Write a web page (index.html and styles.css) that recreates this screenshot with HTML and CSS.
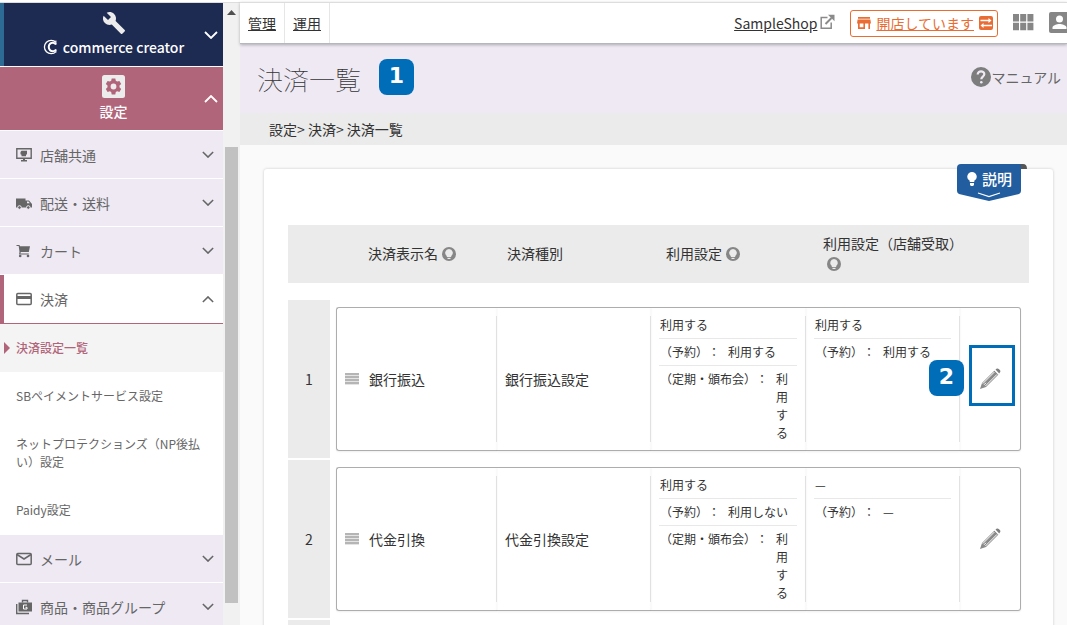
FILE: index.html
```html
<!DOCTYPE html>
<html lang="ja">
<head>
<meta charset="utf-8">
<title>決済一覧</title>
<link rel="stylesheet" href="styles.css">
</head>
<body>
<svg class="defs" aria-hidden="true">
  <symbol id="down" viewBox="0 0 14 8"><path d="M1 1l6 6 6-6" fill="none" stroke="currentColor" stroke-width="1.800"/></symbol>
  <symbol id="up" viewBox="0 0 14 8"><path d="M1 7l6-6 6 6" fill="none" stroke="currentColor" stroke-width="1.800"/></symbol>
  <symbol id="hint" viewBox="0 0 14 14"><circle cx="7" cy="7" r="7" fill="#868686"/><path d="M7 2a3.800 3.800 0 0 0-2.200 6.900V10h4.400V8.900A3.800 3.800 0 0 0 7 2z" fill="#ebebeb"/><path d="M5.500 10.800h3v1.200h-3z" fill="#ebebeb"/></symbol>
  <symbol id="pencil" viewBox="0 0 22 22"><path d="M1 21l2-6L15.500 2.500l4 4L7 19z" fill="#8a8a8a"/><path d="M16.500 1.600l1-.8c.8-.6 1.600-.4 2.300.3l1 1c.7.7.8 1.500.2 2.200l-.8 1.100z" fill="#7e7e7e"/><path d="M3.800 15.600L15.300 4.100M6.300 18.100L18 6.400M5 16.800l2-2" stroke="#fff" stroke-width="1"/><path d="M15.300 2l4.800 4.800" stroke="#fff" stroke-width=".9"/></symbol>
</svg>
<div class="app">
  <aside class="sidebar">
    <nav class="menu">
      <button class="brand" type="button">
        <svg width="24" height="24" viewBox="0 0 24 24"><path d="M22.700 19l-9.100-9.100c.9-2.300.4-5-1.500-6.900-2-2-5-2.400-7.400-1.300L9 6 6 9 1.600 4.700C.4 7.100.9 10.100 2.900 12.100c1.900 1.900 4.600 2.400 6.900 1.500l9.100 9.100c.4.4 1 .4 1.400 0l2.300-2.300c.5-.4.5-1.100.1-1.400z" fill="#ececec"/></svg>
        <span class="brand-name"><svg width="15" height="16" viewBox="0 0 15 16" fill="none"><path d="M13 3.400A6.700 6.700 0 1 0 13 12.600" stroke="#fff" stroke-width="1.300"/><path d="M13 5.500A4 4.300 0 1 0 13 10.500" stroke="#fff" stroke-width="2"/><path d="M12.900 1.500v4M12.900 10.500v3" stroke="#fff"/></svg>commerce creator</span>
        <svg class="toggle" width="14" height="8"><use href="#down"/></svg>
      </button>
      <button class="section" type="button">
        <svg width="23" height="23" viewBox="0 0 23 23"><rect width="23" height="23" rx="2.500" fill="#ececec"/><path d="M9.700 3.500h3.600l.5 2.300 1.400.8 2.200-.7 1.800 3.100-1.700 1.600v1.700l1.700 1.600-1.800 3.100-2.200-.7-1.400.8-.5 2.300H9.700l-.5-2.300-1.400-.8-2.200.7-1.800-3.100 1.700-1.600v-1.700L3.800 9l1.800-3.100 2.200.7 1.400-.8zM11.500 8.600a2.900 2.900 0 1 0 0 5.800 2.900 2.900 0 0 0 0-5.800z" fill="#b1657a" fill-rule="evenodd"/></svg>
        <span>設定</span>
        <svg class="toggle" width="14" height="8"><use href="#up"/></svg>
      </button>
      <button class="item" type="button">
        <svg width="16" height="16" viewBox="0 0 16 16" fill="#666"><path d="M.8 1.800h14.400v9.400H.8z" fill="none" stroke="#666" stroke-width="1.400"/><path d="M5.500 3.800H11v3.400l-1 .5V9.200H5.500V7.700l-1-.5V5zM7 11h2v2h2v1.500H5V13h2z"/></svg>
        <span>店舗共通</span><svg class="arrow" width="12" height="7"><use href="#down"/></svg>
      </button>
      <button class="item" type="button">
        <svg width="16" height="16" viewBox="0 0 16 16" fill="#666"><path d="M0 3.500h9.500v9H0zM9.500 5.500H13L16 9v3.500H9.500z"/><path d="M11 6.500h1.500l1.300 1.800H11z" fill="#eee9f3"/><circle cx="3.500" cy="12.500" r="1.800" stroke="#eee9f3"/><circle cx="12.300" cy="12.500" r="1.800" stroke="#eee9f3"/></svg>
        <span>配送・送料</span><svg class="arrow" width="12" height="7"><use href="#down"/></svg>
      </button>
      <button class="item" type="button">
        <svg width="16" height="16" viewBox="0 0 16 16" fill="#666"><path d="M.5 2h3l.5 1.200h10L12.800 9H4.800l-.4 1.500h8.400v1H3L3.500 9 2.700 3H.5z"/><circle cx="4.200" cy="13" r="1.300"/><circle cx="12" cy="13" r="1.300"/></svg>
        <span>カート</span><svg class="arrow" width="12" height="7"><use href="#down"/></svg>
      </button>
      <button class="item item-open" type="button">
        <svg width="16" height="16" viewBox="0 0 16 16"><rect x=".8" y="2.500" width="14.400" height="11" rx="1" fill="none" stroke="#666" stroke-width="1.500"/><path d="M1 5h14v3H1z" fill="#666"/></svg>
        <span>決済</span><svg class="arrow" width="12" height="7"><use href="#up"/></svg>
      </button>
      <ul class="submenu">
        <li><a class="current" href="#">決済設定一覧</a></li>
        <li><a href="#">SBペイメントサービス設定</a></li>
        <li><a href="#">ネットプロテクションズ（NP後払い）設定</a></li>
        <li><a href="#">Paidy設定</a></li>
      </ul>
      <button class="item" type="button">
        <svg width="16" height="16" viewBox="0 0 16 16" fill="none" stroke="#666" stroke-width="1.500"><rect x=".8" y="2.500" width="14.400" height="11" rx="1"/><path d="M1 3.500l7 4.500 7-4.500"/></svg>
        <span>メール</span><svg class="arrow" width="12" height="7"><use href="#down"/></svg>
      </button>
      <button class="item" type="button">
        <svg width="16" height="16" viewBox="0 0 16 16"><path d="M.7 5v9.500H13" fill="none" stroke="#666" stroke-width="1.400"/><path d="M6.500 3.500v-2h5v2" fill="none" stroke="#666" stroke-width="1.400"/><path d="M2.500 3.500H16V12.500H2.500z" fill="#666"/><path d="M11 6H7.500v4H11V8.300H9.500" fill="none" stroke="#fff"/></svg>
        <span>商品・商品グループ</span><svg class="arrow" width="12" height="7"><use href="#down"/></svg>
      </button>
    </nav>
    <div class="scroll-track" aria-hidden="true">
      <svg width="9" height="5" viewBox="0 0 9 5"><path d="M4.500 0L9 5H0z" fill="#505050"/></svg>
      <div class="scroll-thumb"></div>
    </div>
  </aside>
  <main class="main">
    <header class="topbar">
      <a class="tab" href="#">管理</a>
      <a class="tab" href="#">運用</a>
      <a class="shop" href="#">SampleShop</a>
      <svg class="external" width="15" height="16" viewBox="0 0 15 16" fill="none" stroke="#8a8a8a" stroke-width="1.500"><path d="M7.500 3.500H1.200v10.700h10V8.500"/><path d="M5.500 10l6-6" stroke-width="2"/><path d="M8 .8h6.500v6.500z" fill="#8a8a8a" stroke="none"/></svg>
      <a class="status" href="#">
        <svg width="14" height="14" viewBox="0 0 14 14" fill="#e96d33"><path d="M1 1h12v1.800H1zM.6 3.400h12.800l.6 4h-1V13h-1.600V7.600H8V13H1V7.400H0zM2.700 7.600v3.700h3.700V7.600z" fill-rule="evenodd"/></svg>
        <span>開店しています</span>
        <svg width="14" height="14" viewBox="0 0 14 14"><rect width="14" height="14" rx="2" fill="#e96d33"/><path d="M1.500 4.500h9M4 9.500h9" stroke="#fff" stroke-width="1.300"/><path d="M9.500 2l3 2.500-3 2.500zM4.500 7l-3 2.500 3 2.500z" fill="#fff"/></svg>
      </a>
      <button class="plain" type="button" aria-label="アプリ"><svg width="21" height="17" viewBox="0 0 21 17" fill="#868686"><path d="M0 0h6v7.500H0zM7.200 0h6v7.500h-6zM14.400 0h6v7.500h-6zM0 8.700h6v7.500H0zM7.200 8.700h6v7.500h-6zM14.400 8.700h6v7.500h-6z"/></svg></button>
      <button class="plain" type="button" aria-label="アカウント"><svg width="18" height="21" viewBox="0 0 18 21"><rect width="21" height="21" rx="2" fill="#868686"/><circle cx="10.500" cy="7" r="3.500" fill="#fff"/><path d="M3.500 17v-1.500c0-2.300 4.500-3.500 7-3.500s7 1.200 7 3.500V17z" fill="#fff"/></svg></button>
    </header>
    <div class="heading">
      <h1>決済一覧</h1>
      <span class="badge">1</span>
      <a class="manual" href="#"><svg width="20" height="20" viewBox="0 0 20 20"><circle cx="10" cy="10" r="10" fill="#7d7d7d"/><path d="M6.700 7.500c0-4.300 6.800-4 6.600-.2-.1 2.300-3 2.500-3 5" fill="none" stroke="#eee9f3" stroke-width="2.200"/><circle cx="10.300" cy="15.200" r="1.300" fill="#eee9f3"/></svg>マニュアル</a>
    </div>
    <div class="crumbs">設定&gt; 決済&gt; 決済一覧</div>
    <section class="panel">
      <button class="explain" type="button">
        <svg class="explain-bg" width="70" height="38" viewBox="0 0 70 38"><path d="M58 0h8q4 0 4 5H60z" fill="#555"/><path d="M4 0h59q1 1 1 3v24q0 2-2 3L32 37 2 30q-2-1-2-3V4q0-4 4-4z" fill="#215d9f"/><path d="M21 29l11 3.500L43 29" fill="none" stroke="#fff" stroke-width="1.200"/></svg>
        <svg class="bulb" width="10" height="14" viewBox="0 0 10 14"><path d="M5 0a4.700 4.700 0 0 0-2.300 8.800V10h4.600V8.800A4.700 4.700 0 0 0 5 0zM3 11h4v2l-1 1H4l-1-1z" fill="#fff"/></svg>
        <span>説明</span>
      </button>
      <table class="list">
        <thead>
          <tr>
            <th class="h-name" scope="col">決済表示名<svg class="hint" width="14" height="14"><use href="#hint"/></svg></th>
            <th class="h-kind" scope="col">決済種別</th>
            <th class="h-use" scope="col">利用設定<svg class="hint" width="14" height="14"><use href="#hint"/></svg></th>
            <th class="h-store" scope="col">利用設定（店舗受取）<br><svg class="hint" width="14" height="14"><use href="#hint"/></svg></th>
          </tr>
        </thead>
        <tbody>
          <tr>
            <td class="num">1</td>
            <td class="name"><div class="cell mid"><span class="grip"></span>銀行振込</div></td>
            <td><div class="cell mid">銀行振込設定</div></td>
            <td><div class="cell"><dl><div><dd class="whole">利用する</dd></div><div><dt>（予約）：</dt><dd>利用する</dd></div><div><dt>（定期・頒布会）：</dt><dd>利用する</dd></div></dl></div></td>
            <td><div class="cell"><dl><div><dd class="whole">利用する</dd></div><div><dt>（予約）：</dt><dd>利用する</dd></div></dl></div></td>
            <td class="edit"><button class="plain" type="button" aria-label="編集"><svg width="22" height="22"><use href="#pencil"/></svg></button><span class="frame"></span><span class="badge badge-edit">2</span></td>
          </tr>
          <tr>
            <td class="num">2</td>
            <td class="name"><div class="cell mid"><span class="grip"></span>代金引換</div></td>
            <td><div class="cell mid">代金引換設定</div></td>
            <td><div class="cell"><dl><div><dd class="whole">利用する</dd></div><div><dt>（予約）：</dt><dd>利用しない</dd></div><div><dt>（定期・頒布会）：</dt><dd>利用する</dd></div></dl></div></td>
            <td><div class="cell"><dl><div><dd class="whole">—</dd></div><div><dt>（予約）：</dt><dd>—</dd></div></dl></div></td>
            <td class="edit"><button class="plain" type="button" aria-label="編集"><svg width="22" height="22"><use href="#pencil"/></svg></button></td>
          </tr>
          <tr class="next"><td class="num"></td></tr>
        </tbody>
      </table>
    </section>
  </main>
</div>
</body>
</html>
```
FILE: styles.css
```css
* { box-sizing: border-box; }
body {
  margin: 0;
  height: 100vh;
  overflow: hidden;
  background: #fff;
  color: #333;
  font: 14px/20px "Noto Sans CJK JP", "Noto Sans", sans-serif;
}
button { border: 0; padding: 0; background: none; color: inherit; font: inherit; cursor: pointer; }
a { color: inherit; }
svg { display: block; flex: none; }
.defs { position: absolute; width: 0; height: 0; }
.app { display: flex; height: 100%; padding-top: 2px; overflow: hidden; }

.sidebar { display: flex; flex: none; width: 240px; border-top: 1px solid #ddd; overflow: hidden; }
.menu { flex: 1; }
.menu button { display: flex; width: 100%; border-bottom: 1px solid #fff; }
.brand, .section {
  position: relative;
  flex-direction: column;
  align-items: center;
  height: 64px;
  color: #fff;
  font-weight: 500;
}
.menu .brand { padding: 8px 0 0 4px; background: linear-gradient(90deg, #2d6a94 4px, #1d2b53 4px); }
.menu .section { padding: 8px 0 0 4px; background: #b1657a; }
.brand-name { display: flex; align-items: center; gap: 5px; margin-top: 2px; }
.section span { margin-top: 3px; }
.toggle { position: absolute; right: 5px; top: 28px; }
.menu .item {
  align-items: center;
  gap: 8px;
  height: 48px;
  padding: 0 9px 0 16px;
  background: #eee9f3;
  color: #666;
}
.menu .item-open {
  height: 49px;
  padding-left: 12px;
  border-left: 4px solid #b1657a;
  border-bottom-color: #b1657a;
  background: #fff;
}
.arrow { margin-left: auto; }
.submenu { margin: 0; padding: 0 0 1px; list-style: none; background: #fff; color: #666; font-size: 12px; line-height: 18px; }
.submenu a { display: block; padding: 15px 16px; text-decoration: none; }
.submenu .current {
  position: relative;
  background: #f4f4f4;
  color: #b1657a;
  font-weight: 500;
}
.submenu .current::before {
  content: "";
  position: absolute;
  left: 4px;
  top: 18px;
  border: 6px solid transparent;
  border-left-color: #b1657a;
  border-right: 0;
}
.scroll-track {
  display: flex;
  flex-direction: column;
  align-items: center;
  width: 17px;
  padding: 7px 2px 22px;
  background: #f1f1f1;
}
.scroll-thumb { flex: 1; width: 13px; margin-top: 132px; background: #c1c1c1; }

.main { flex: 1; min-width: 0; background: #fafafa; }
.topbar {
  position: relative;
  display: flex;
  align-items: center;
  height: 42px;
  border-top: 1px solid #ddd;
  border-bottom: 1px solid #b5b8b8;
  background: #fff;
  box-shadow: 0 1px 3px #0004;
}
.tab { display: flex; align-items: center; height: 100%; padding: 0 8px; border-right: 1px solid #e6e6e6; }
.shop { margin: 0 3px 0 auto; }
.external { margin-bottom: 2px; }
.status {
  display: flex;
  align-items: center;
  gap: 5px;
  height: 27px;
  margin: 0 15px;
  padding: 0 4px 0 6px;
  border: 1px solid #e96d33;
  border-radius: 3px;
  color: #e96d33;
  text-decoration: none;
}
.status span { text-decoration: underline; }
.topbar .plain { margin-bottom: 2px; }
.topbar .plain + .plain { margin-left: 15px; }
.heading { display: flex; align-items: center; height: 69px; padding: 0 6px 4px 17px; background: #eee9f3; }
h1 { margin: 4px 18px 0 0; font-size: 26px; line-height: 38px; font-weight: 100; }
.badge {
  width: 35px;
  height: 36px;
  border-radius: 8px;
  background: #006db8;
  color: #fff;
  font: bold 22px/34px "DejaVu Sans", sans-serif;
  text-align: center;
}
.manual { display: flex; align-items: center; margin-left: auto; color: #666; text-decoration: none; }
.crumbs { height: 32px; padding: 6px 29px; background: #ebebeb; }

.panel { position: relative; margin: 24px 14px 0 24px; padding: 56px 24px 24px; border-radius: 3px; background: #fff; box-shadow: 0 0 3px #0003; }
.explain {
  position: absolute;
  top: -5px;
  right: 26px;
  display: flex;
  gap: 5px;
  width: 70px;
  height: 38px;
  padding: 5px 10px;
  color: #fff;
  font-size: 15px;
  font-weight: 500;
}
.explain-bg { position: absolute; inset: 0; }
.bulb, .explain span { position: relative; }
.bulb { margin-top: 3px; }

.list, .list thead, .list tbody { display: block; }
.list tr { display: grid; grid-template-columns: 42px 167fr 154fr 155fr 154fr 61fr; padding-right: 8px; }
.list thead tr { height: 58px; margin-bottom: 17px; padding-bottom: 2px; align-items: center; background: #ebebeb; }
.list th { padding: 0; font-weight: 400; text-align: left; }
.hint { display: inline-block; margin-left: 4px; vertical-align: -2px; }
.list .h-name { grid-column: 2; padding-left: 38px; }
.list .h-kind { padding-left: 10px; }
.list .h-use { padding-left: 15px; }
.list .h-store { grid-column: span 2; padding-left: 17px; }
.list tbody tr { margin-bottom: 2px; }
.list td { display: flex; margin: 7px 0; padding: 8px 0; border: 1px solid #adadad; border-width: 1px 0; box-shadow: 0 1px 2px #0001; }
.list .num { align-items: center; justify-content: center; margin: 0; border: 0; background: #ebebeb; box-shadow: none; }
.list .name { margin-left: 6px; border-left-width: 1px; border-radius: 3px 0 0 3px; }
.cell { flex: 1; min-width: 0; padding: 0 8px; border-right: 1px solid #e6e6e6; }
.mid { display: flex; align-items: center; gap: 10px; }
.grip { width: 14px; height: 12px; background: repeating-linear-gradient(#b5b5b5 0 2px, #e4e4e4 2px 3px); }
dl { margin: 0; font-size: 12px; line-height: 18px; }
dl > div { display: flex; padding: 4px 0; border-bottom: 1px solid #e8e8e8; }
dl > div:first-child { padding-top: 0; }
dl > div:last-child { padding-bottom: 0; border: 0; }
dt { flex: none; padding-left: 1px; text-spacing-trim: space-all; }
dd { min-width: 0; margin: 0; padding: 0 8px; }
dd.whole { padding: 0 1px; }
.list .edit { position: relative; align-items: center; justify-content: center; border-right-width: 1px; border-radius: 0 3px 3px 0; }
.frame { position: absolute; left: 9px; top: 37px; width: 46px; height: 61px; border: 3px solid #006db8; pointer-events: none; }
.badge-edit { position: absolute; left: -31px; top: 52px; }
.list .next { min-height: 158px; }
```
